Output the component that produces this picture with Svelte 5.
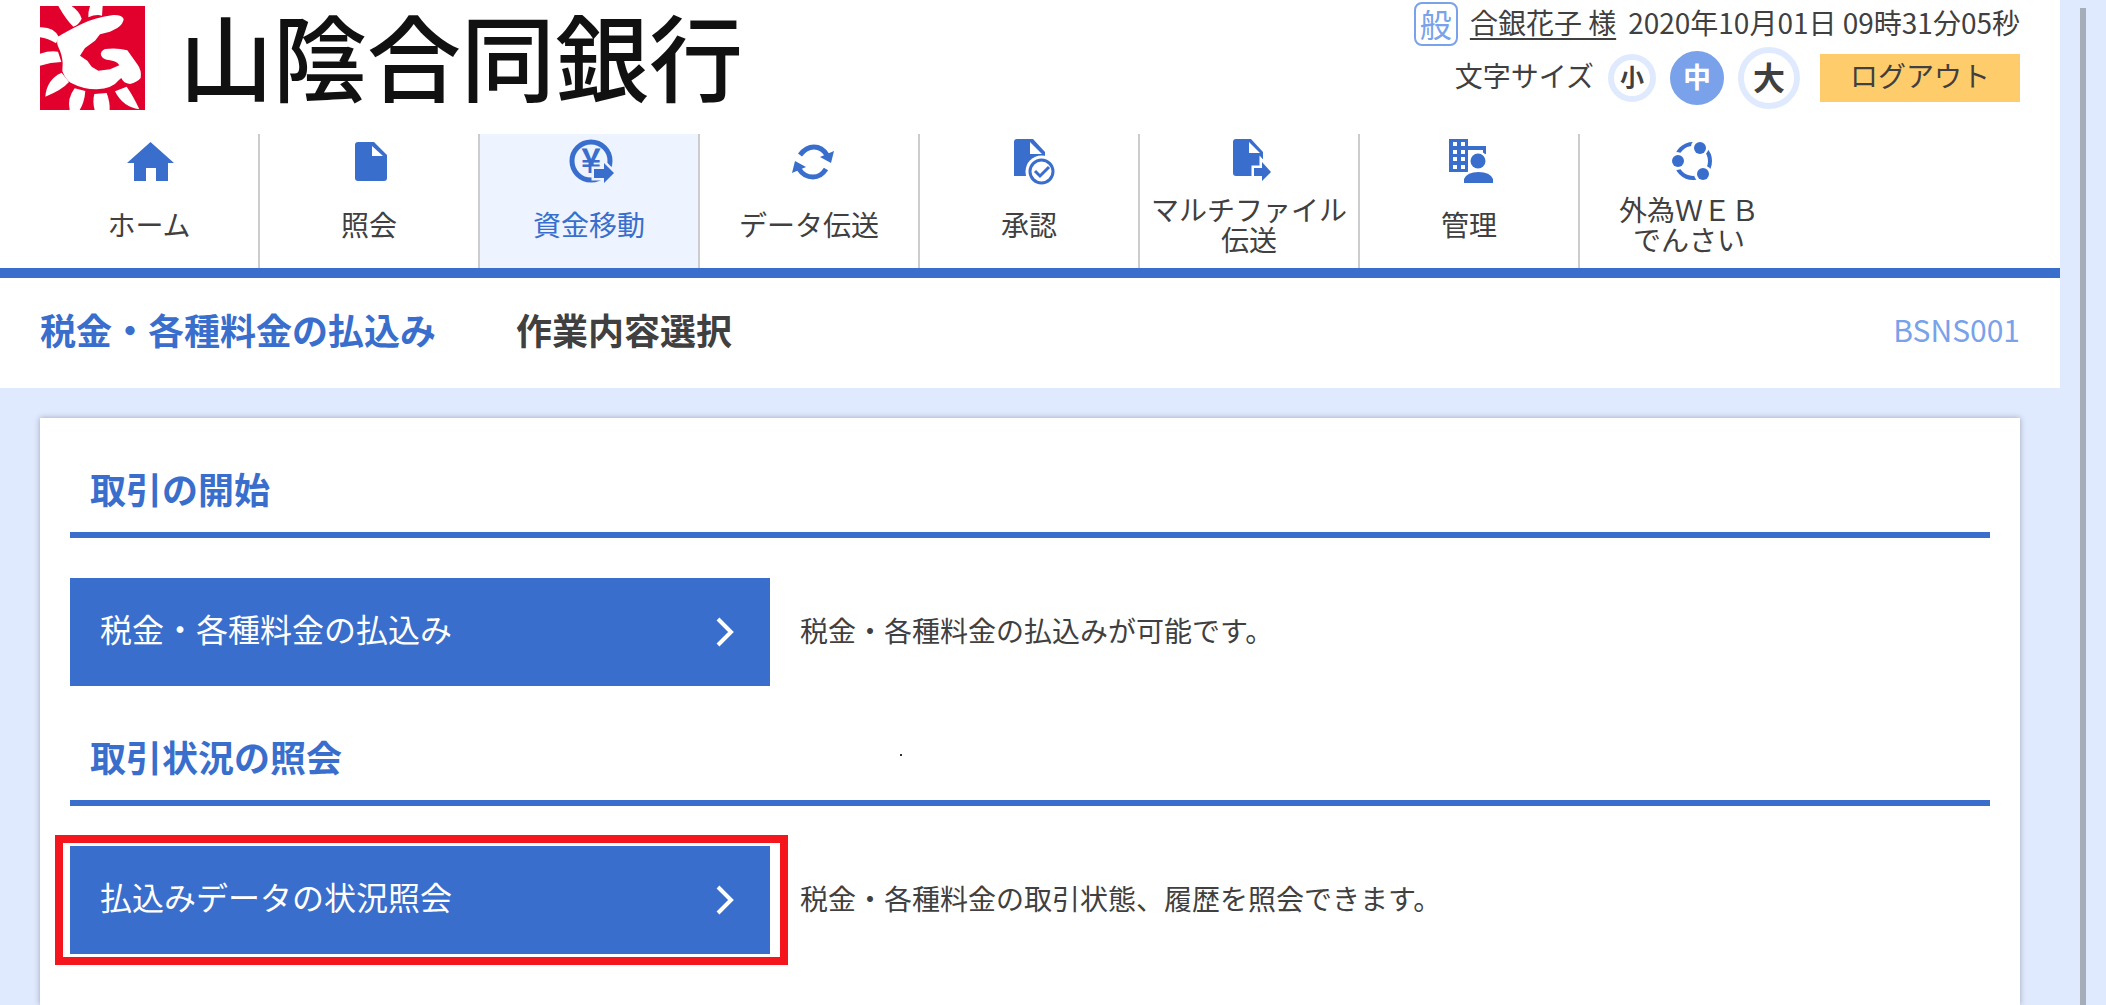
<script lang="ts">
	type NavItem = { icon: string; lines: string[]; active?: boolean };

	const navItems: NavItem[] = [
		{ icon: 'home', lines: ['ホーム'] },
		{ icon: 'file', lines: ['照会'] },
		{ icon: 'yen', lines: ['資金移動'], active: true },
		{ icon: 'sync', lines: ['データ伝送'] },
		{ icon: 'approve', lines: ['承認'] },
		{ icon: 'export', lines: ['マルチファイル', '伝送'] },
		{ icon: 'admin', lines: ['管理'] },
		{ icon: 'share', lines: ['外為ＷＥＢ', 'でんさい'] }
	];

	const sections = [
		{
			title: '取引の開始',
			action: '税金・各種料金の払込み',
			description: '税金・各種料金の払込みが可能です。',
			marked: false
		},
		{
			title: '取引状況の照会',
			action: '払込みデータの状況照会',
			description: '税金・各種料金の取引状態、履歴を照会できます。',
			marked: true
		}
	];

	const sizes = [
		{ id: 'small', label: '小' },
		{ id: 'medium', label: '中' },
		{ id: 'large', label: '大' }
	];

	let textSize = $state('medium');
</script>

<div class="screen">
	<div class="page">
		<header class="header">
			<a class="brand" href="#home">
				<svg class="brand-mark" viewBox="30 18 315 312" aria-hidden="true">
					<path fill="#e2002d" d="M30 18h315v312H30z" />
					<g fill="#fff">
						<path d="M281 57Q276 44 250 45Q195 52 155 72Q110 94 84 110Q78 128 86 143Q97 165 98 190L97 213Q106 238 122 248Q160 268 200 268Q248 266 266 241L274 234Q280 250 300 252Q322 246 332 234Q336 212 322 193Q307 172 292 151Q260 142 225 147Q210 154 213 166Q218 179 240 181Q262 184 268 196L240 208L205 212L185 200L172 182L150 167L165 144L195 122L210 103L240 95L262 84Q280 72 281 57Z" />
						<path d="M85 18h40Q149 35 155 56Q148 73 130 80Q110 62 85 18Z" />
						<path d="M180 18h38l-2 29q-18-5-41 5q-1-17 5-34Z" />
						<path d="M30 82Q72 80 87 112L78 130Q54 115 30 112Z" />
						<path d="M30 161Q60 151 84 155L94 186Q62 187 30 197Z" />
						<path d="M95 218L117 246Q96 270 46 290Q50 238 95 218Z" />
						<path d="M134 265L166 273Q163 308 149 330H119Q111 295 134 265Z" />
						<path d="M193 282L230 279Q240 305 239 330H194Q187 305 193 282Z" />
						<path d="M255 274L290 260Q310 288 328 328Q278 321 255 274Z" />
					</g>
				</svg>
				<span class="brand-name">山陰合同銀行</span>
			</a>

			<div class="account">
				<div class="account-row">
					<span class="badge">般</span>
					<a class="user" href="#user">合銀花子 様</a>
					<time datetime="2020-10-01T09:31:05">2020年10月01日 09時31分05秒</time>
				</div>
				<div class="tools">
					<span class="tools-label" id="size-label">文字サイズ</span>
					<div class="sizes" role="group" aria-labelledby="size-label">
						{#each sizes as size}
							<button
								type="button"
								class="size {size.id}"
								class:selected={textSize === size.id}
								aria-pressed={textSize === size.id}
								onclick={() => (textSize = size.id)}
							>
								{size.label}
							</button>
						{/each}
					</div>
					<button type="button" class="logout">ログアウト</button>
				</div>
			</div>
		</header>

		<nav class="nav">
			{#each navItems as item}
				<a class="nav-item" class:active={item.active} href="#{item.icon}">
					<svg class="nav-icon" viewBox="0 0 52 48" aria-hidden="true">
						{#if item.icon === 'home'}
							<path d="M27.5 4L51 25H45V43H33V30H23V43H11V25H4Z" />
						{:else if item.icon === 'file'}
							<path fill-rule="evenodd" d="M15 4H31L44 17V40Q44 43 41 43H15Q12 43 12 40V7Q12 4 15 4ZM29 8V18H40Z" />
						{:else if item.icon === 'yen'}
							<circle class="line" cx="28" cy="23" r="19" stroke-width="5" />
							<text x="28" y="35" text-anchor="middle">¥</text>
							<path class="halo" d="M31 31H41V25L51 35L41 45V40H31Z" />
						{:else if item.icon === 'sync'}
							<path class="line" stroke-width="5" d="M17 17Q23 9 31 9Q39 9 44 17" />
							<path d="M37 19L51 13L48 25Z" />
							<path class="line" stroke-width="5" d="M43 31Q38 39 30 39Q21 39 16 31" />
							<path d="M23 29L9 35L12 23Z" />
						{:else if item.icon === 'approve'}
							<path fill-rule="evenodd" d="M14 1H30L42 14V38H11V4Q11 1 14 1ZM27 4V16H39Z" />
							<circle class="cut" cx="38.5" cy="33.5" r="16" />
							<circle class="line" cx="38.5" cy="33.5" r="11.5" stroke-width="3" />
							<path class="line" stroke-width="3" d="M32 33L37 38L46 29" />
						{:else if item.icon === 'export'}
							<path fill-rule="evenodd" d="M13 1H28L40 14V38H13Q10 38 10 35V4Q10 1 13 1ZM26 4V15H37Z" />
							<path class="halo" d="M31 30H39V24L48 34L39 43V38H31Z" />
						{:else if item.icon === 'admin'}
							<path fill-rule="evenodd" d="M6 1H25V34H6ZM10 4H14V8H10ZM18 4H22V8H18ZM10 12H14V16H10ZM18 12H22V16H18ZM10 19H14V23H10ZM18 19H22V23H18ZM10 27H14V31H10ZM18 27H22V31H18Z" />
							<path d="M25 8H43V16H40V12H25Z" />
							<circle class="cut" cx="35" cy="23" r="10" />
							<circle cx="35" cy="23" r="7.5" />
							<path class="halo" d="M21 45V41Q24 34 35.5 34Q47 34 50 41V45Z" />
						{:else}
							<circle class="line" cx="30" cy="23" r="17" stroke-width="4" />
							<g class="cut">
								<circle cx="37" cy="9" r="9" />
								<circle cx="14" cy="23" r="9" />
								<circle cx="40" cy="36" r="9" />
							</g>
							<circle cx="37" cy="10" r="6" />
							<circle cx="15" cy="23" r="6" />
							<circle cx="40" cy="36" r="6" />
						{/if}
					</svg>
					<span class="nav-label">
						{#each item.lines as line}
							<span>{line}</span>
						{/each}
					</span>
				</a>
			{/each}
		</nav>

		<div class="title-bar">
			<h1>税金・各種料金の払込み</h1>
			<p class="step">作業内容選択</p>
			<span class="screen-id">BSNS001</span>
		</div>

		<main class="card">
			{#each sections as section}
				<section>
					<h2>{section.title}</h2>
					{#if section.marked}<span class="speck"></span>{/if}
					<div class="action-row">
						<button type="button" class="action" class:marked={section.marked}>
							<span class="action-text">{section.action}</span>
							<svg class="chevron" viewBox="0 0 20 30" aria-hidden="true">
								<path d="M2 2L15 15L2 28" />
							</svg>
						</button>
						<p class="description">{section.description}</p>
					</div>
				</section>
			{/each}
		</main>
	</div>
	<div class="gutter"><div class="thumb"></div></div>
</div>

<style>
	:global(body) {
		background: #e0eaff;
	}

	.screen {
		--blue: #3a6ecd;
		--blue-light: #79a2ea;
		--pale: #e0eaff;
		display: flex;
		min-height: 100vh;
		font-family: 'Noto Sans CJK JP', sans-serif;
		font-size: 28px;
		font-weight: 400;
		line-height: 40px;
		color: #404040;
		background: var(--pale);
	}

	.screen * {
		box-sizing: border-box;
	}

	h1,
	h2,
	p {
		margin: 0;
	}

	a {
		color: inherit;
		text-decoration: none;
	}

	button {
		padding: 0;
		border: 0;
		font: inherit;
		color: inherit;
		cursor: pointer;
	}

	.page {
		flex: 1;
		display: flex;
		flex-direction: column;
		min-width: 0;
	}

	.header {
		display: flex;
		justify-content: space-between;
		align-items: flex-start;
		height: 134px;
		padding: 0 40px;
		background: #fff;
	}

	.brand {
		display: flex;
		align-items: flex-start;
		gap: 34px;
		padding-top: 6px;
	}

	.brand-mark {
		width: 105px;
		height: 104px;
	}

	.brand-name {
		font-size: 94px;
		font-weight: 500;
		line-height: 96px;
		color: #111;
		white-space: nowrap;
	}

	.account {
		display: flex;
		flex-direction: column;
		align-items: flex-end;
		white-space: nowrap;
	}

	.account-row {
		display: flex;
		align-items: flex-start;
		gap: 12px;
		height: 46px;
		padding-top: 2px;
	}

	.badge {
		display: flex;
		align-items: center;
		justify-content: center;
		width: 44px;
		height: 44px;
		padding-bottom: 2px;
		border: 2px solid var(--blue-light);
		border-radius: 8px;
		font-size: 32px;
		color: var(--blue-light);
	}

	.user {
		text-decoration: underline;
		text-underline-offset: 4px;
	}

	.tools {
		display: flex;
		align-items: center;
		height: 64px;
	}

	.tools-label {
		padding-bottom: 6px;
	}

	.sizes {
		display: flex;
		align-items: center;
		gap: 14px;
		margin: 0 20px 0 14px;
	}

	.size {
		display: flex;
		align-items: center;
		justify-content: center;
		padding-bottom: 4px;
		border: 6px solid var(--pale);
		border-radius: 50%;
		background: #fff;
		font-weight: 700;
		line-height: 32px;
	}

	.small {
		width: 48px;
		height: 48px;
		font-size: 24px;
	}

	.medium {
		width: 54px;
		height: 54px;
		font-size: 28px;
	}

	.large {
		width: 62px;
		height: 62px;
		font-size: 32px;
	}

	.size.selected {
		border-color: var(--blue-light);
		background: var(--blue-light);
		color: #fff;
	}

	.logout {
		width: 200px;
		height: 48px;
		padding-bottom: 6px;
		background: #ffcc6b;
	}

	.nav {
		display: flex;
		height: 144px;
		padding: 0 40px;
		border-bottom: 10px solid var(--blue);
		background: #fff;
	}

	.nav-item {
		--cell: #fff;
		display: flex;
		flex-direction: column;
		align-items: center;
		width: 220px;
		padding: 4px 0 6px;
		border-right: 2px solid #ccc;
		background: var(--cell);
	}

	.nav-item:last-child {
		border-right-color: transparent;
	}

	.nav-item.active {
		--cell: #edf3ff;
		color: var(--blue);
	}

	.nav-icon {
		width: 52px;
		height: 48px;
		fill: var(--blue);
	}

	.nav-icon text {
		font-size: 34px;
		font-weight: 700;
	}

	.line {
		fill: none;
		stroke: var(--blue);
	}

	.halo {
		stroke: var(--cell);
		stroke-width: 5;
		paint-order: stroke;
	}

	.cut {
		fill: var(--cell);
	}

	.nav-label {
		flex: 1;
		display: flex;
		flex-direction: column;
		justify-content: center;
		line-height: 30px;
		text-align: center;
		white-space: nowrap;
	}

	.nav-label span {
		display: block;
	}

	.title-bar {
		display: flex;
		align-items: center;
		gap: 80px;
		height: 110px;
		padding: 0 40px 8px;
		background: #fff;
	}

	h1,
	h2,
	.step {
		font-size: 36px;
		font-weight: 700;
		line-height: 48px;
	}

	h1,
	h2 {
		color: var(--blue);
	}

	.screen-id {
		margin-left: auto;
		font-size: 30px;
		color: var(--blue-light);
	}

	.card {
		flex: 1;
		margin: 30px 40px 0;
		padding: 40px 30px 50px;
		background: #fff;
		box-shadow: 0 0 6px rgb(0 0 0 / 0.3);
	}

	section {
		position: relative;
	}

	section + section {
		margin-top: 40px;
	}

	h2 {
		padding: 6px 20px 20px;
		border-bottom: 6px solid var(--blue);
	}

	.speck {
		position: absolute;
		top: 28px;
		left: 830px;
		width: 2px;
		height: 2px;
		background: #333;
	}

	.action-row {
		display: flex;
		align-items: center;
		gap: 30px;
		margin-top: 40px;
	}

	.action {
		position: relative;
		display: flex;
		align-items: center;
		justify-content: space-between;
		width: 700px;
		height: 108px;
		padding: 0 34px 0 30px;
		background: var(--blue);
		font-size: 32px;
		color: #fff;
	}

	.action-text {
		padding-bottom: 8px;
	}

	.description {
		padding-bottom: 4px;
	}

	.marked::after {
		content: '';
		position: absolute;
		inset: -11px -18px -11px -15px;
		border: 8px solid #f5161d;
		pointer-events: none;
	}

	.chevron {
		width: 20px;
		height: 30px;
		fill: none;
		stroke: #fff;
		stroke-width: 4;
	}

	.gutter {
		display: flex;
		justify-content: center;
		width: 46px;
		padding-top: 8px;
	}

	.thumb {
		width: 6px;
		background: #a5adb9;
	}
</style>
